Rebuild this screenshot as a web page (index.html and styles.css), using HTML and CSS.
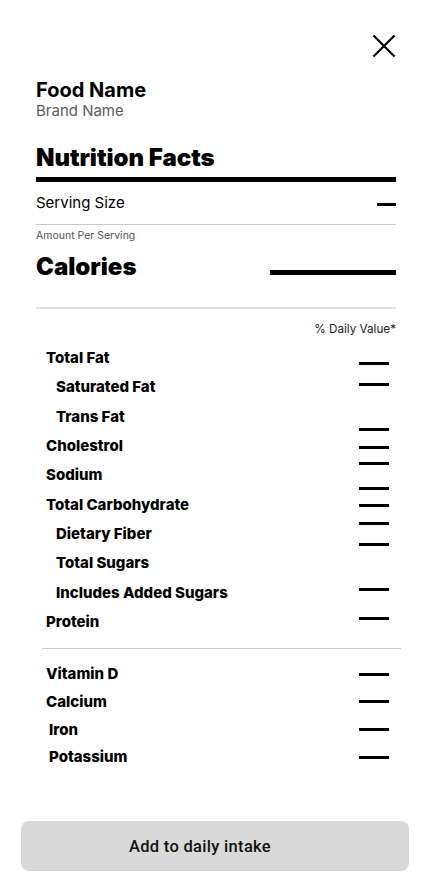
FILE: index.html
```html
<!DOCTYPE html>
<html lang="en">
<head>
<meta charset="utf-8">
<title>Nutrition Facts</title>
<link rel="stylesheet" href="styles.css">
</head>
<body>
<div class="page">
  <div class="sheet">
    <div class="topbar">
      <button class="close" aria-label="Close">
        <svg width="24" height="24" viewBox="0 0 24 24"><path d="M1.5 1.5 L22.5 22.5 M22.5 1.5 L1.5 22.5" stroke="#000" stroke-width="2.2" fill="none"/></svg>
      </button>
    </div>
    <div class="food">
      <div class="food-name">Food Name</div>
      <div class="brand-name">Brand Name</div>
    </div>
    <h1 class="title">Nutrition Facts</h1>
    <div class="rule-thick"></div>
    <div class="serving">
      <span class="serving-label">Serving Size</span>
      <span class="serving-dash"></span>
    </div>
    <div class="rule-thin"></div>
    <div class="amount">Amount Per Serving</div>
    <div class="calories">
      <span class="calories-label">Calories</span>
      <span class="calories-bar"></span>
    </div>
    <div class="rule-light"></div>
    <div class="dv">% Daily Value*</div>
    <div class="nutrients">
      <ul class="labels">
        <li>Total Fat</li>
        <li class="sub">Saturated Fat</li>
        <li class="sub">Trans Fat</li>
        <li>Cholestrol</li>
        <li>Sodium</li>
        <li>Total Carbohydrate</li>
        <li class="sub">Dietary Fiber</li>
        <li class="sub">Total Sugars</li>
        <li class="sub">Includes Added Sugars</li>
        <li>Protein</li>
      </ul>
      <div class="dashes">
        <span class="dash d1"></span>
        <span class="dash d2"></span>
        <span class="dash d3"></span>
        <span class="dash d4"></span>
        <span class="dash d5"></span>
        <span class="dash d6"></span>
        <span class="dash d7"></span>
        <span class="dash d8"></span>
        <span class="dash d9"></span>
        <span class="dash d10"></span>
        <span class="dash d11"></span>
      </div>
    </div>
    <div class="divider"></div>
    <ul class="vitamins">
      <li><span>Vitamin D</span><span class="dash"></span></li>
      <li><span>Calcium</span><span class="dash"></span></li>
      <li class="shift"><span>Iron</span><span class="dash"></span></li>
      <li class="shift"><span>Potassium</span><span class="dash"></span></li>
    </ul>
  </div>
  <button class="add">Add to daily intake</button>
</div>
</body>
</html>
```

FILE: styles.css
```css
* { box-sizing: border-box; }
html, body { margin: 0; padding: 0; background: #fff; }
body {
  font-family: Inter, "Noto Sans", sans-serif;
  color: #000;
}
.page {
  width: 430px;
  min-height: 894px;
  display: flex;
  flex-direction: column;
}
.sheet {
  padding: 0 34px 0 36px;
}
.topbar {
  display: flex;
  justify-content: flex-end;
  padding-top: 34px;
}
.close {
  border: 0;
  background: none;
  padding: 0;
  margin: 0;
  width: 24px;
  height: 24px;
  display: block;
}
.close svg { display: block; }
.food { margin-top: 20px; }
.food-name {
  font-size: 20px;
  line-height: 24px;
  font-weight: 700;
}
.brand-name {
  font-size: 15px;
  line-height: 18px;
  color: #5c5c5c;
}
.title {
  margin: 23px 0 0;
  font-size: 24px;
  line-height: 29px;
  font-weight: 900;
  letter-spacing: -0.05px;
}
.rule-thick {
  margin-top: 5px;
  height: 5px;
  background: #000;
}
.serving {
  margin-top: 12px;
  display: flex;
  justify-content: space-between;
  align-items: flex-start;
  height: 18px;
}
.serving-label {
  font-size: 15px;
  line-height: 18px;
}
.serving-dash {
  width: 19px;
  height: 3px;
  background: #000;
  margin-top: 9px;
}
.rule-thin {
  margin-top: 12px;
  height: 1px;
  background: #c8c8c8;
}
.amount {
  margin-top: 4px;
  font-size: 10.5px;
  line-height: 13px;
  color: #555;
}
.calories {
  margin-top: 10px;
  display: flex;
  justify-content: space-between;
  align-items: flex-start;
}
.calories-label {
  font-size: 24px;
  line-height: 29px;
  font-weight: 900;
}
.calories-bar {
  width: 126px;
  height: 5px;
  background: #000;
  margin-top: 18px;
}
.rule-light {
  margin-top: 26px;
  height: 2px;
  background: #e2e2e2;
}
.dv {
  margin-top: 13px;
  text-align: right;
  font-size: 11.7px;
  line-height: 15px;
  color: #222;
}
.nutrients {
  margin-top: 6px;
  display: grid;
  grid-template-columns: 1fr 30px;
  padding-right: 7px;
}
.labels {
  list-style: none;
  margin: 0;
  padding: 0 0 0 10px;
}
.labels li {
  font-size: 15px;
  line-height: 29.33px;
  font-weight: 800;
}
.labels li.sub { padding-left: 10px; }
.dashes {
  display: flex;
  flex-direction: column;
}
.dash {
  display: block;
  width: 30px;
  height: 3px;
  background: #000;
}
.d1 { margin-top: 19px; }
.d2 { margin-top: 18px; }
.d3 { margin-top: 42px; }
.d4 { margin-top: 15px; }
.d5 { margin-top: 13px; }
.d6 { margin-top: 22px; }
.d7 { margin-top: 14px; }
.d8 { margin-top: 15px; }
.d9 { margin-top: 18px; }
.d10 { margin-top: 42px; }
.d11 { margin-top: 26px; }
.divider {
  margin: 12px -5px 0 6px;
  height: 1px;
  background: #c8c8c8;
}
.vitamins {
  list-style: none;
  margin: 11px 0 0;
  padding: 0 7px 0 10px;
}
.vitamins li {
  display: flex;
  justify-content: space-between;
  align-items: center;
  font-size: 15px;
  line-height: 27.67px;
  font-weight: 800;
}
.vitamins li.shift { padding-left: 3px; }
.add {
  margin: auto 21px 23px;
  height: 50px;
  border: 0;
  border-radius: 8px;
  background: #d9d9d9;
  padding: 0 30px 0 0;
  font-family: Roboto, "Noto Sans", sans-serif;
  font-size: 16.5px;
  font-weight: 500;
  letter-spacing: 0.3px;
  color: #111;
}
```
